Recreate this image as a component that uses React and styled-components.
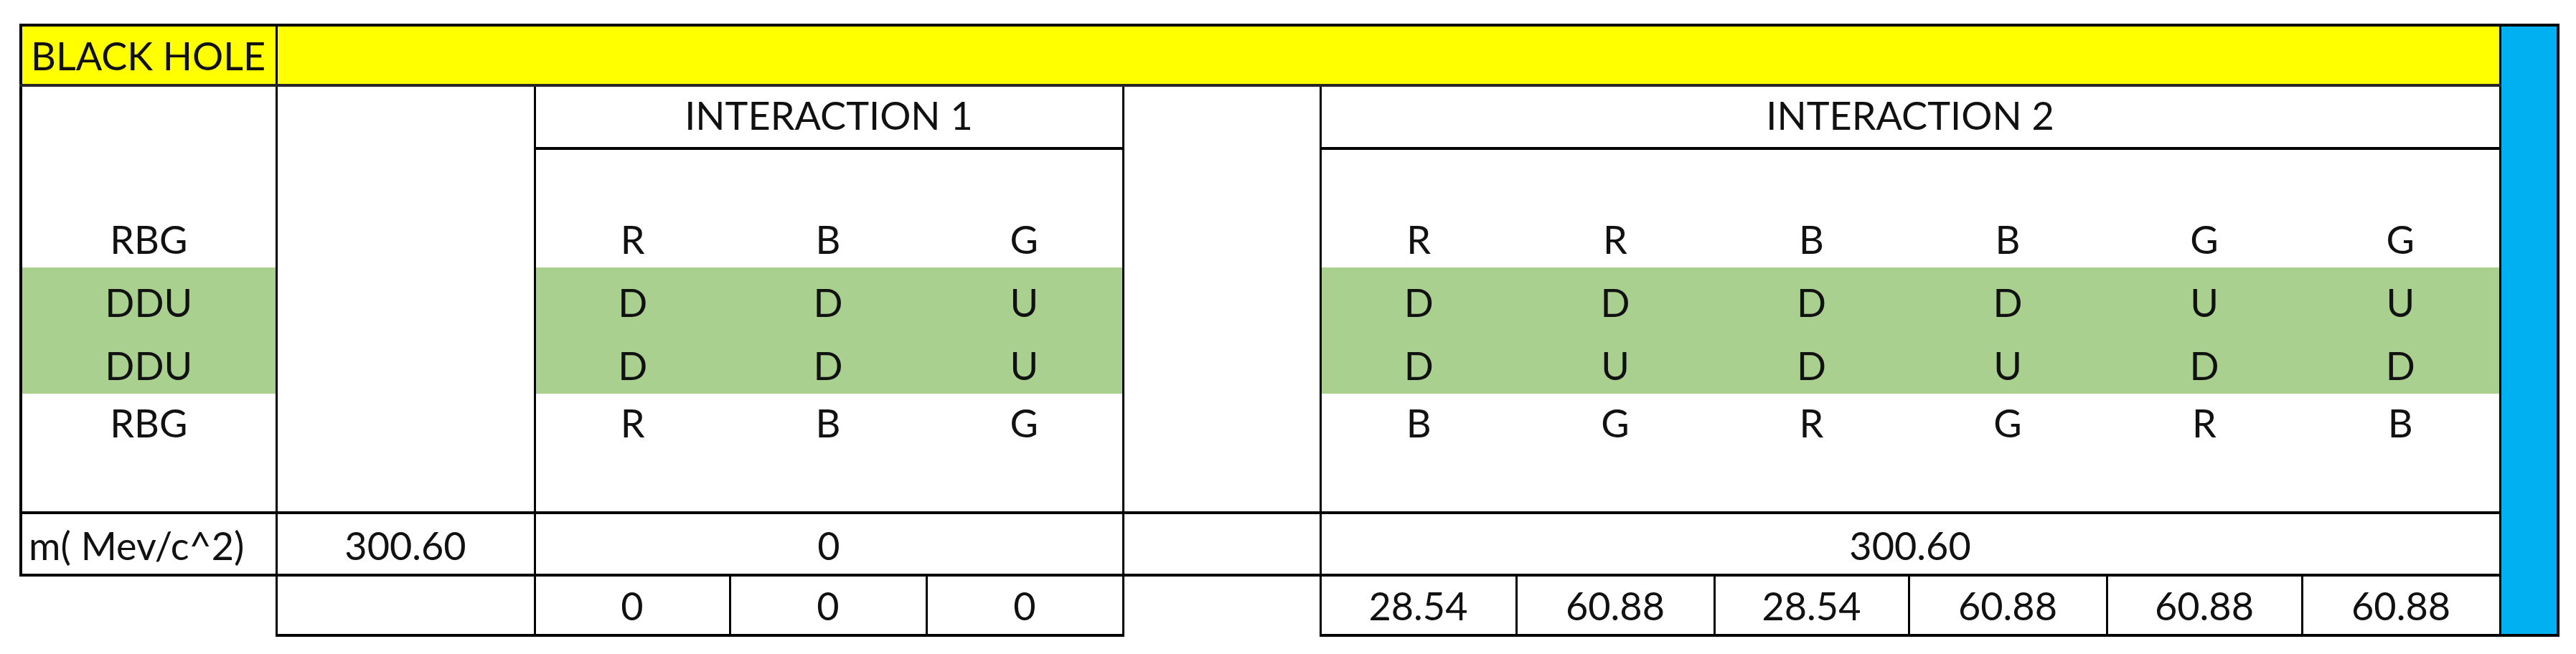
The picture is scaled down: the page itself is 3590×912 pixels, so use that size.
import React from 'react';
import styled, { createGlobalStyle } from 'styled-components';

const GlobalStyle = createGlobalStyle`
  body {
    margin: 0;
    background: #fff;
  }
`;

const Sheet = styled.table`
  border-collapse: collapse;
  table-layout: fixed;
  width: 3540px;
  margin: 33px 0 0 27px;
  color: #111;
  font-family: Lato, 'Liberation Sans', sans-serif;
  font-size: 54px;
  line-height: 1;
`;

const Col = styled.col`
  width: ${(p) => p.$w}px;
`;

const Row = styled.tr`
  height: ${(p) => p.$h}px;
`;

const edge = (w, c = '#000') => (w ? `${w}px solid ${c}` : 'none');

const Cell = styled.td`
  padding: 0 ${(p) => (p.$align === 'left' ? '0 11px 9px' : '0 12px')};
  padding-bottom: 12px;
  vertical-align: bottom;
  text-align: ${(p) => p.$align || 'center'};
  white-space: nowrap;
  overflow: visible;
  background: ${(p) => p.$bg || 'transparent'};
  border-top: ${(p) => edge(p.$t)};
  border-right: ${(p) => edge(p.$r)};
  border-bottom: ${(p) => edge(p.$b, p.$bc)};
  border-left: ${(p) => edge(p.$l)};
`;

const Title = styled(Cell)`
  padding-left: 12px;
  padding-bottom: 12px;
`;

const Header = styled(Cell)`
  padding-bottom: 17px;
`;

const SideBar = styled.td`
  background: #00b0f0;
  border: 4px solid #000;
  border-left-width: 3px;
  padding: 0;
`;

const YELLOW = '#ffff00';
const GREEN = '#a9d08e';

const labels = ['RBG', 'DDU', 'DDU', 'RBG'];
const first = [
  ['R', 'B', 'G'],
  ['D', 'D', 'U'],
  ['D', 'D', 'U'],
  ['R', 'B', 'G'],
];
const second = [
  ['R', 'R', 'B', 'B', 'G', 'G'],
  ['D', 'D', 'D', 'D', 'U', 'U'],
  ['D', 'U', 'D', 'U', 'D', 'D'],
  ['B', 'G', 'R', 'G', 'R', 'B'],
];
const firstMass = ['0', '0', '0'];
const secondMass = ['28.54', '60.88', '28.54', '60.88', '60.88', '60.88'];
const heights = [80, 88, 88, 80];

const Blank = ({ h, closing }) => (
  <Row $h={h}>
    <Cell $l={4} $r={3} $b={closing ? 4 : 0} />
    <Cell $r={3} $b={closing ? 4 : 0} />
    <Cell colSpan={3} $r={3} $b={closing ? 4 : 0} />
    <Cell $r={3} $b={closing ? 4 : 0} />
    <Cell colSpan={6} $r={3} $b={closing ? 4 : 0} />
  </Row>
);

export default function App() {
  return (
    <>
      <GlobalStyle />
      <Sheet>
        <colgroup>
          <Col $w={356} />
          <Col $w={360} />
          <Col $w={272} />
          <Col $w={274} />
          <Col $w={274} />
          <Col $w={275} />
          <Col $w={273} />
          <Col $w={276} />
          <Col $w={271} />
          <Col $w={276} />
          <Col $w={272} />
          <Col $w={276} />
          <Col $w={81} />
        </colgroup>
        <tbody>
          <Row $h={84}>
            <Title $align="left" $bg={YELLOW} $t={4} $l={4} $r={3} $b={4} $bc="#262626">
              BLACK HOLE
            </Title>
            <Cell colSpan={11} $bg={YELLOW} $t={4} $r={3} $b={4} $bc="#262626" />
            <SideBar rowSpan={10} />
          </Row>
          <Row $h={88}>
            <Cell $l={4} $r={3} />
            <Cell $r={3} />
            <Header colSpan={3} $r={3} $b={4}>
              INTERACTION 1
            </Header>
            <Cell $r={3} />
            <Header colSpan={6} $r={3} $b={4}>
              INTERACTION 2
            </Header>
          </Row>
          <Blank h={86} />
          {labels.map((label, i) => {
            const bg = i === 1 || i === 2 ? GREEN : undefined;
            return (
              <Row $h={heights[i]} key={i}>
                <Cell $l={4} $r={3} $bg={bg}>
                  {label}
                </Cell>
                <Cell $r={3} />
                {first[i].map((v, j) => (
                  <Cell key={j} $bg={bg} $r={j === 2 ? 3 : 0}>
                    {v}
                  </Cell>
                ))}
                <Cell $r={3} />
                {second[i].map((v, j) => (
                  <Cell key={j} $bg={bg} $r={j === 5 ? 3 : 0}>
                    {v}
                  </Cell>
                ))}
              </Row>
            );
          })}
          <Blank h={86} closing />
          <Row $h={87}>
            <Cell $align="left" $l={4} $r={3} $b={4}>
              m( Mev/c^2)
            </Cell>
            <Cell $r={3} $b={4}>
              300.60
            </Cell>
            <Cell colSpan={3} $r={3} $b={4}>
              0
            </Cell>
            <Cell $r={3} $b={4} />
            <Cell colSpan={6} $r={3} $b={4}>
              300.60
            </Cell>
          </Row>
          <Row $h={84}>
            <Cell />
            <Cell $l={3} $r={3} $b={4} />
            {firstMass.map((v, j) => (
              <Cell key={j} $r={3} $b={4}>
                {v}
              </Cell>
            ))}
            <Cell />
            {secondMass.map((v, j) => (
              <Cell key={j} $l={j === 0 ? 3 : 0} $r={3} $b={4}>
                {v}
              </Cell>
            ))}
          </Row>
        </tbody>
      </Sheet>
    </>
  );
}
